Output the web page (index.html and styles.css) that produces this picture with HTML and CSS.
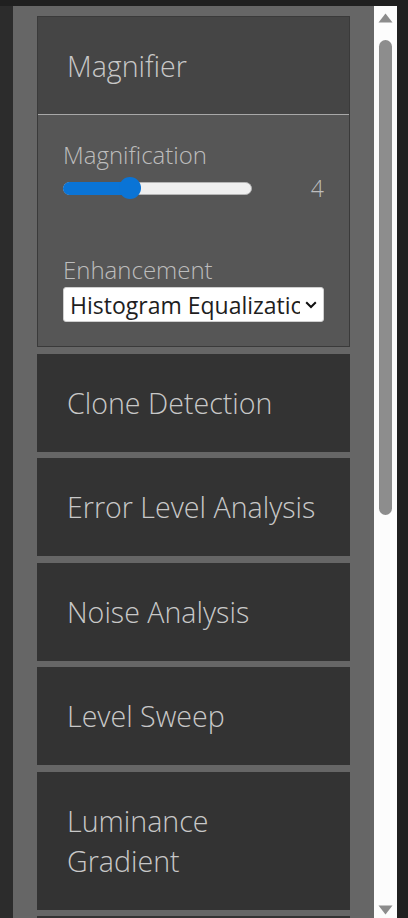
FILE: index.html
```html
<!DOCTYPE html>
<html lang="en">
<head>
<meta charset="utf-8">
<title>Tools</title>
<link rel="stylesheet" href="styles.css">
</head>
<body>
<div class="app">
  <div class="rail"></div>
  <main class="panel">
    <section class="card card--open">
      <header class="card-head">Magnifier</header>
      <div class="card-body">
        <div class="field-label">Magnification</div>
        <div class="slider-row">
          <div class="slider">
            <div class="slider-fill" style="width:35.4%"></div>
            <div class="slider-thumb" style="left:35.4%"></div>
          </div>
          <span class="slider-value">4</span>
        </div>
        <div class="field-label field-label--gap">Enhancement</div>
        <div class="select">
          <span class="select-text">Histogram Equalization</span>
          <svg class="select-chevron" width="12" height="8" viewBox="0 0 12 8"><path d="M1.2 1.2 L6 6 L10.8 1.2" fill="none" stroke="#111" stroke-width="2"/></svg>
        </div>
      </div>
    </section>
    <section class="card"><header class="card-head">Clone Detection</header></section>
    <section class="card"><header class="card-head">Error Level Analysis</header></section>
    <section class="card"><header class="card-head">Noise Analysis</header></section>
    <section class="card"><header class="card-head">Level Sweep</header></section>
    <section class="card"><header class="card-head card-head--stacked">Luminance Gradient</header></section>
    <section class="card card--tail"></section>
  </main>
  <div class="scrollbar">
    <svg class="sb-arrow sb-arrow--up" width="15" height="10" viewBox="0 0 15 10"><path d="M7.5 0.5 L14.5 9.5 L0.5 9.5 Z" fill="#8c8c8c"/></svg>
    <div class="sb-thumb"></div>
    <svg class="sb-arrow sb-arrow--down" width="15" height="10" viewBox="0 0 15 10"><path d="M0.5 0.5 L14.5 0.5 L7.5 9.5 Z" fill="#8c8c8c"/></svg>
  </div>
</div>
</body>
</html>
```
FILE: styles.css
```css
html, body {
  margin: 0;
  height: 100%;
}
body {
  background: #202020;
  font-family: "Open Sans", "Noto Sans", sans-serif;
  overflow: hidden;
}
.app {
  display: flex;
  height: 918px;
  padding: 6px 11px 0 0;
  box-sizing: border-box;
}
.rail {
  flex: none;
  width: 13px;
  background: #2c2c2c;
}
.panel {
  flex: 1;
  min-width: 0;
  background: #666666;
  padding: 10px 24px 0;
  overflow: hidden;
}
.card {
  border: 1px solid #333333;
  background: #333333;
  color: #c8c8c8;
  margin-bottom: 6.5px;
}
.card--tail {
  height: 96px;
}
.card-head {
  padding: 28px 6px 28px 29px;
  font-size: 28.6px;
  font-weight: 350;
  line-height: 40px;
  white-space: nowrap;
  overflow: hidden;
}
.card-head--stacked {
  white-space: normal;
  width: min-content;
}
.card--open {
  background: #565656;
  border-color: #3a3a3a;
}
.card--open .card-head {
  background: #454545;
  padding-top: 29px;
  border-bottom: 1px solid #a8a8a8;
}
.card-body {
  padding: 25px 25px 24px;
}
.field-label {
  font-size: 24px;
  font-weight: 350;
  line-height: 30px;
  color: #bdbdbd;
}
.field-label--gap {
  margin-top: 56px;
}
.slider-row {
  display: flex;
  align-items: center;
  height: 22px;
  margin-top: 7px;
}
.slider {
  position: relative;
  width: 189px;
  height: 13px;
  box-sizing: border-box;
  background: #efefef;
  border: 1px solid #b5b5b5;
  border-radius: 7px;
}
.slider-fill {
  margin: -1px 0 0 -1px;
  height: 13px;
  background: #0a74d6;
  border-radius: 7px 0 0 7px;
}
.slider-thumb {
  position: absolute;
  top: 50%;
  width: 22px;
  height: 22px;
  margin: -11px 0 0 -11px;
  border-radius: 50%;
  background: #0a74d6;
}
.slider-value {
  margin-left: auto;
  font-size: 23px;
  font-weight: 300;
  color: #bdbdbd;
  line-height: 22px;
}
.select {
  display: flex;
  align-items: center;
  height: 35px;
  margin-top: 2px;
  box-sizing: border-box;
  background: #ffffff;
  border: 1px solid #cfcfcf;
  border-radius: 3px;
  padding-left: 6px;
}
.select-text {
  flex: 1;
  min-width: 0;
  overflow: hidden;
  white-space: nowrap;
  font-size: 23px;
  color: #1e1e1e;
}
.select-chevron {
  flex: none;
  margin: 0 6px 0 5px;
}
.scrollbar {
  flex: none;
  width: 23px;
  background: #fcfcfc;
  display: flex;
  flex-direction: column;
  align-items: center;
}
.sb-arrow {
  display: block;
  flex: none;
}
.sb-arrow--up {
  margin-top: 7px;
}
.sb-thumb {
  flex: none;
  width: 13px;
  height: 475px;
  margin-top: 17px;
  border-radius: 7px;
  background: #8d8d8d;
}
.sb-arrow--down {
  margin-top: auto;
  margin-bottom: 3px;
}
```
